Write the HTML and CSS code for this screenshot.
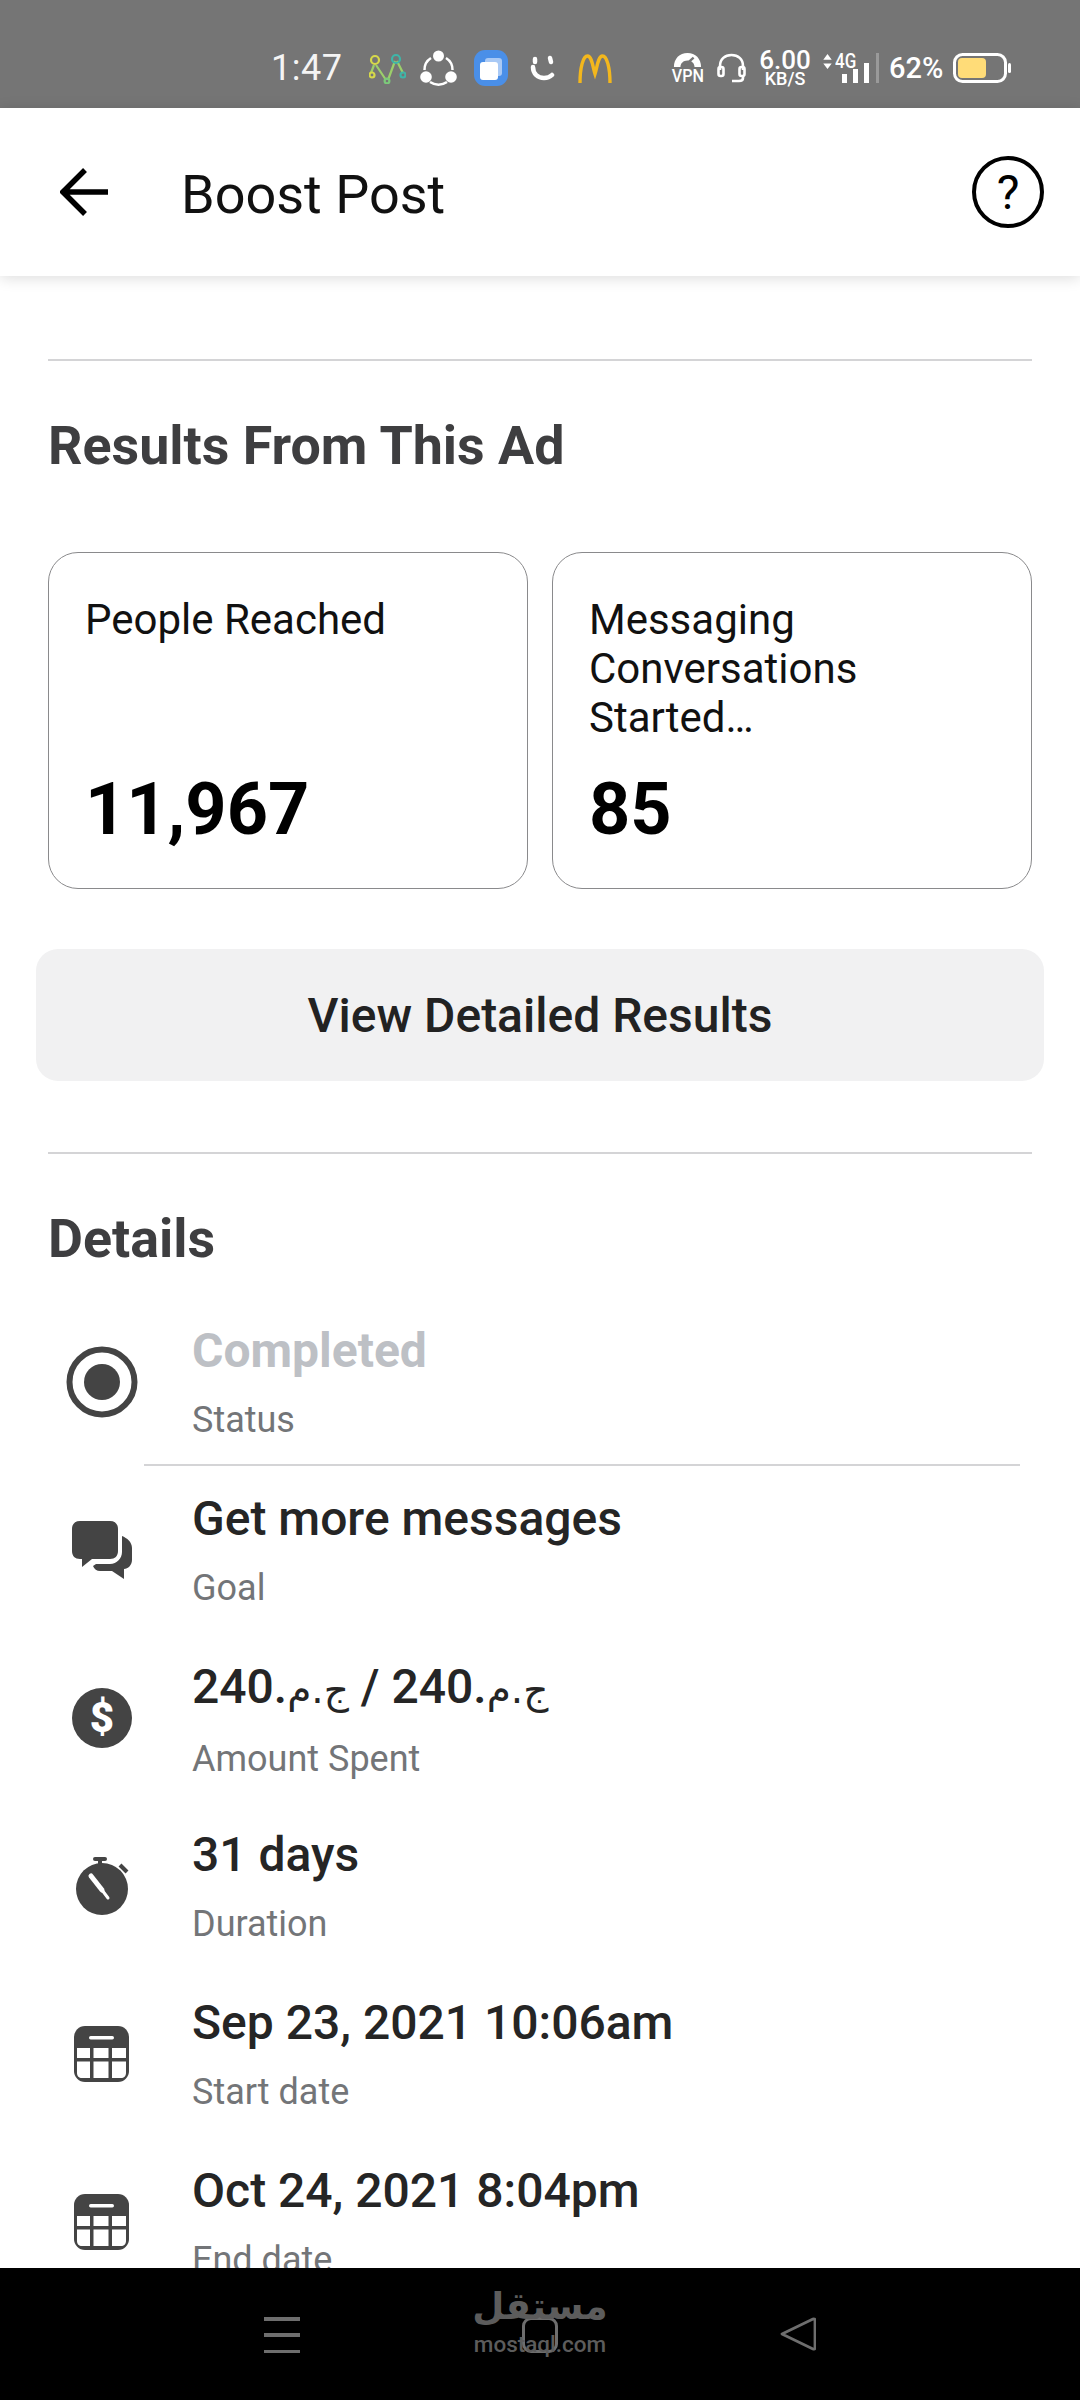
FILE: index.html
```html
<!DOCTYPE html>
<html lang="en">
<head>
<meta charset="utf-8">
<title>Boost Post</title>
<link rel="stylesheet" href="styles.css">
</head>
<body>
<div class="phone">
  <div class="status">
    <span class="time">1:47</span>
    <svg class="si si-net" viewBox="0 0 37 32" fill="none" stroke-width="2.2"><path d="M5 13 2 21M7 13l10 15M19 28 26 9M28 9l6 12" stroke="#9ccf6a"/><circle cx="6" cy="8" r="4" stroke="#d6d84a"/><circle cx="3" cy="23" r="2.5" stroke="#d6d84a"/><circle cx="27" cy="7" r="4" stroke="#3fb5a8"/><circle cx="34" cy="23" r="2.5" stroke="#3fb5a8"/><circle cx="18" cy="29" r="2.4" stroke="#7cc97a"/></svg>
    <svg class="si si-share" viewBox="0 0 37 36"><path d="M11 8A14 14 0 0 0 4.500 20M26 8A14 14 0 0 1 32.500 20" fill="none" stroke="#fff" stroke-width="2.5"/><circle cx="18.500" cy="6" r="5.500" fill="#fff"/><circle cx="6" cy="27" r="5.800" fill="#fff"/><circle cx="31" cy="27" r="5.800" fill="#fff"/><path d="M10 32c5 3.500 12 3.500 17 0" fill="none" stroke="#fff" stroke-width="2.500"/></svg>
    <svg class="si si-blue" viewBox="0 0 34 36"><rect width="34" height="36" rx="11" fill="#4a8fe8"/><rect x="11" y="8" width="17" height="18" rx="3" fill="#a9c9f5"/><rect x="6" y="12" width="18" height="18" rx="3" fill="#fff"/></svg>
    <svg class="si si-smile" viewBox="0 0 25 26" fill="none" stroke="#fff" stroke-linecap="round"><path d="M3 12c0 7 5 11 11 11 3 0 6-1 8-3" stroke-width="4.500"/><path d="M5 4v3M20 3l1 4" stroke-width="4.500"/></svg>
    <svg class="si si-m" viewBox="0 0 34 29" fill="none" stroke="#f3b71d" stroke-width="3.400"><path d="M2 29C2 14 5 2 9.500 2S15 14 17 20C19 14 20 2 24.500 2S32 14 32 29"/></svg>
    <div class="vpn">
      <svg class="si si-vpn" viewBox="0 0 31 16"><path d="M1 16C1 7 7 1 15.500 1S30 7 30 16h-7c0-4-3-7-7.500-7S8 12 8 16z" fill="#fff"/><path d="M13 14 22 6" stroke="#757575" stroke-width="2.500"/></svg>
      <span class="vpn-text">VPN</span>
    </div>
    <svg class="si si-head" viewBox="0 0 29 30" fill="none" stroke="#fff" stroke-width="2.600"><path d="M3 17V13C3 6 8 2 14.500 2S26 6 26 13v4"/><rect x="1.500" y="14" width="5" height="9" rx="2"/><rect x="22.500" y="14" width="5" height="9" rx="2"/><path d="M26 23v2c0 2-2 3-4 3h-7"/></svg>
    <div class="speed"><span class="speed-v">6.00</span><span class="speed-u">KB/S</span></div>
    <div class="net">
      <svg class="si si-arrows" viewBox="0 0 9 16" fill="#fff"><path d="M4.500 0 9 6H0zM0 10h9l-4.500 6z"/></svg>
      <span class="net-4g">4G</span>
      <svg class="si si-bars" viewBox="0 0 57 30"><rect x="19" y="21" width="5" height="9" fill="#fff"/><rect x="30" y="16" width="5" height="14" fill="#fff"/><rect x="41" y="10" width="5" height="20" fill="#fff"/><rect x="53" y="0" width="3" height="30" fill="#9a9a9a"/></svg>
    </div>
    <span class="pct">62%</span>
    <svg class="si si-bat" viewBox="0 0 58 30"><rect x="1.500" y="1.500" width="51" height="27" rx="8" fill="none" stroke="#fff" stroke-width="3"/><rect x="5" y="5" width="28" height="20" rx="4" fill="#ffdc78"/><rect x="55" y="10" width="3" height="10" rx="1.500" fill="#fff"/></svg>
  </div>

  <header class="topbar">
    <svg class="back" viewBox="0 0 48 48" fill="none" stroke="#000" stroke-width="5.500"><path d="M48 24H4M25 2 3 24l22 22"/></svg>
    <h1 class="page-title">Boost Post</h1>
    <div class="help">?</div>
  </header>

  <main class="content">
    <hr class="rule first">
    <h2 class="sec-title results">Results From This Ad</h2>
    <div class="cards">
      <div class="card">
        <div class="card-label">People Reached</div>
        <div class="card-value">11,967</div>
      </div>
      <div class="card">
        <div class="card-label">Messaging Conversations Started…</div>
        <div class="card-value">85</div>
      </div>
    </div>
    <div class="btn">View Detailed Results</div>
    <hr class="rule second">
    <h2 class="sec-title details">Details</h2>

    <div class="row sep">
      <svg class="ic ic-status" viewBox="0 0 72 72"><circle cx="36" cy="36" r="32.500" fill="none" stroke="#444" stroke-width="6"/><circle cx="36" cy="36" r="18" fill="#444"/></svg>
      <div class="row-text"><div class="val muted">Completed</div><div class="lab">Status</div></div>
    </div>
    <div class="row">
      <svg class="ic ic-chat" viewBox="0 0 60 58" fill="#444"><path d="M8 0h30c5 0 8 3 8 8v22c0 5-3 8-8 8H20L10 46l0-8H8c-5 0-8-3-8-8V8c0-5 3-8 8-8z"/><path d="M50 15c5 2 10 6 10 12v12c0 5-4 9-8 9v10L40 50H28c-3 0-6-2-7-5l3-2h14c7 0 12-6 12-12z"/></svg>
      <div class="row-text"><div class="val">Get more messages</div><div class="lab">Goal</div></div>
    </div>
    <div class="row">
      <svg class="ic ic-dollar" viewBox="0 0 60 60"><circle cx="30" cy="30" r="30" fill="#444"/><text class="dollar-glyph" x="30" y="44" text-anchor="middle">$</text></svg>
      <div class="row-text"><div class="val"><bdi dir="ltr">240.<span class="ar" lang="ar">ج.م</span></bdi> / <bdi dir="ltr">240.<span class="ar" lang="ar">ج.م</span></bdi></div><div class="lab">Amount Spent</div></div>
    </div>
    <div class="row">
      <svg class="ic ic-watch" viewBox="0 0 54 58"><rect x="17" y="0" width="14" height="4" rx="2" fill="#444"/><rect x="22" y="3" width="4" height="5" fill="#444"/><path d="m44 8 7 7" stroke="#444" stroke-width="4"/><ellipse cx="26" cy="32" rx="26" ry="26" fill="#444"/><path d="M15 19 26 33" stroke="#fff" stroke-width="5" stroke-linecap="round"/><path d="M26 33 32 41" stroke="#fff" stroke-width="3" stroke-linecap="round"/></svg>
      <div class="row-text"><div class="val">31 days</div><div class="lab">Duration</div></div>
    </div>
    <div class="row">
      <svg class="ic ic-cal" viewBox="0 0 55 56"><use href="#calendar"/></svg>
      <div class="row-text"><div class="val">Sep 23, 2021 10:06am</div><div class="lab">Start date</div></div>
    </div>
    <div class="row">
      <svg class="ic ic-cal" viewBox="0 0 55 56">
        <g id="calendar">
          <rect width="55" height="56" rx="11" fill="#444"/>
          <rect x="15" y="10" width="25" height="3.500" rx="1.700" fill="#fff"/>
          <path d="M3 22h13v10H3zM19.500 22h15v10h-15zM38 22h14v10H38zM3 35.500h13V52H8c-3 0-5-2-5-5zM19.500 35.500h15V52h-15zM38 35.500h14V47c0 3-2 5-5 5h-9z" fill="#fff"/>
        </g>
      </svg>
      <div class="row-text"><div class="val">Oct 24, 2021 8:04pm</div><div class="lab">End date</div></div>
    </div>
  </main>

  <nav class="navbar">
    <div class="burger"><i></i><i></i><i></i></div>
    <div class="home"></div>
    <svg class="tri" viewBox="0 0 36 34" fill="none" stroke="#6e6e6e" stroke-width="2.800" stroke-linejoin="round"><path d="M33 2 2 17l0 0 31 15c1 .5 2 0 2-1V3c0-1-1-1.500-2-1z"/></svg>
    <div class="mark"><span class="mark-ar" lang="ar">مستقل</span><span class="mark-en">mostaql.com</span></div>
  </nav>
</div>
</body>
</html>
```
FILE: styles.css
```css
* { box-sizing: border-box; }
html, body { margin: 0; padding: 0; background: #fff; }
body { font-family: Roboto, "DejaVu Sans", sans-serif; }
.phone { width: 1080px; height: 2400px; display: flex; flex-direction: column; overflow: hidden; }

/* status bar */
.status { height: 108px; flex: none; background: #757575; color: #fff; display: flex; align-items: center; padding: 28px 0 0 271px; }
.si { display: block; flex: none; }
.time { font-size: 36px; width: 98px; letter-spacing: 0.5px; color: #f4f4f4; }
.si-net { width: 37px; height: 32px; margin-right: 14px; }
.si-share { width: 37px; height: 36px; margin-right: 17px; }
.si-blue { width: 34px; height: 36px; margin-right: 22px; }
.si-smile { width: 25px; height: 26px; margin-right: 23px; }
.si-m { width: 34px; height: 29px; margin-right: 60px; }
.vpn { width: 31px; height: 32px; margin-right: 14px; display: flex; flex-direction: column; align-items: center; }
.si-vpn { width: 31px; height: 15px; }
.vpn-text { font-size: 19px; font-weight: 500; line-height: 17px; transform: scaleX(0.85); }
.si-head { width: 29px; height: 30px; margin-right: 14px; }
.speed { width: 50px; display: flex; flex-direction: column; align-items: center; line-height: 1; margin-right: 13px; }
.speed-v { font-size: 26px; font-weight: 500; line-height: 22px; }
.speed-u { font-size: 18px; font-weight: 500; line-height: 16px; }
.net { width: 57px; height: 30px; position: relative; margin-right: 9px; }
.si-arrows { position: absolute; left: 0; top: 1px; width: 9px; height: 15px; }
.net-4g { position: absolute; left: 12px; top: -2px; font-size: 20px; font-weight: 500; line-height: 20px; transform: scaleX(0.85); transform-origin: left; }
.si-bars { position: absolute; left: 0; top: 0; width: 57px; height: 30px; }
.pct { font-size: 29px; width: 64px; font-weight: 500; }
.si-bat { width: 58px; height: 30px; }

/* top bar */
.topbar { height: 168px; flex: none; background: #fff; display: flex; align-items: center; padding: 0 36px 0 60px; box-shadow: 0 2px 14px rgba(0,0,0,0.14); position: relative; z-index: 1; }
.back { width: 48px; height: 48px; flex: none; }
.page-title { margin: 4px 0 0 73px; font-size: 54px; font-weight: 400; color: #111; flex: 1; }
.help { width: 72px; height: 72px; border: 4px solid #000; border-radius: 50%; display: flex; align-items: center; justify-content: center; font-size: 48px; color: #000; flex: none; }

/* content */
.content { flex: 1; overflow: hidden; padding: 0 48px; min-height: 0; }
.rule { border: 0; height: 2px; background: #d4d4d6; margin: 0; }
.rule.first { margin-top: 83px; }
.rule.second { margin-top: 71px; }
.sec-title { margin: 0; font-size: 53.800px; font-weight: 700; color: #3e3e40; line-height: 60px; }
.results { margin-top: 55px; }
.details { margin-top: 55px; }
.cards { display: grid; grid-template-columns: 480px 480px; gap: 24px; margin-top: 76px; }
.card { height: 337px; border: 1.500px solid #8a8a8c; border-radius: 30px; padding: 42px 36px 36px; display: flex; flex-direction: column; justify-content: space-between; }
.card-label { font-size: 42px; line-height: 49px; color: #111; height: 147px; }
.card-value { font-size: 72px; font-weight: 700; line-height: 84px; color: #000; }
.btn { margin: 60px -12px 0; height: 132px; background: #f1f1f2; border-radius: 22px; display: flex; align-items: center; justify-content: center; font-size: 48px; font-weight: 500; color: #222; }

/* detail rows */
.row { height: 168px; margin-left: 18px; display: flex; align-items: center; position: relative; }
.details + .row { margin-top: 29px; }
.row.sep::after { content: ""; position: absolute; left: 78px; right: 12px; bottom: 0; height: 2px; background: #d4d4d6; }
.ic { flex: none; display: block; }
.ic-status { width: 72px; height: 72px; margin-right: 54px; margin-top: -1px; }
.ic-chat { width: 60px; height: 58px; margin: 0 60px 0 6px; }
.ic-dollar { width: 60px; height: 60px; margin: 0 60px 0 6px; }
.ic-watch { width: 54px; height: 58px; margin: 0 62px 0 10px; }
.ic-cal { width: 55px; height: 56px; margin: 0 63px 0 8px; }
.dollar-glyph { font-family: Roboto, sans-serif; font-size: 42px; font-weight: 900; fill: #fff; }
.row-text { display: flex; flex-direction: column; align-self: flex-start; padding-top: 23px; }
.val { font-size: 48px; font-weight: 500; line-height: 60px; color: #252525; white-space: nowrap; }
.val.muted { color: #bdc0c5; font-weight: 700; }
.ar { font-family: "DejaVu Sans", sans-serif; font-weight: 400; font-size: 39px; }
.lab { font-size: 36px; line-height: 42px; color: #737578; margin-top: 18px; }

/* nav bar */
.navbar { height: 132px; flex: none; background: #000; position: relative; z-index: 2; display: flex; align-items: flex-start; padding: 49px 0 0 264px; }
.burger { width: 36px; height: 36px; display: flex; flex-direction: column; justify-content: space-between; margin-right: 222px; }
.burger i { display: block; height: 3.500px; background: #6e6e6e; }
.home { width: 36px; height: 36px; border: 3px solid #6e6e6e; border-radius: 9px; margin-right: 222px; }
.tri { width: 36px; height: 34px; }
.mark { position: absolute; left: 440px; width: 200px; top: 14px; display: flex; flex-direction: column; align-items: center; color: #5c5c5c; }
.mark-ar { font-family: "DejaVu Sans", sans-serif; font-weight: 700; font-size: 37px; line-height: 50px; }
.mark-en { font-size: 22.500px; font-weight: 500; line-height: 24px; }
```
